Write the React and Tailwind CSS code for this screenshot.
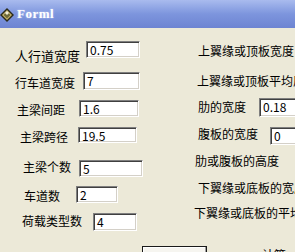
import React from 'react';

const cjk = { fontFamily: '"Noto Sans CJK SC", "Liberation Sans", sans-serif' };

function Field({ value, w, h, mt, ml = 0 }) {
  return (
    <div
      className="shrink-0 bg-white border border-t-[#7f7f7f] border-l-[#7f7f7f] border-b-white border-r-white shadow-[inset_1px_1px_0_#404040,inset_-1px_-1px_0_#d4d0c8] pl-[3px] text-[12px] leading-[15px] text-black"
      style={{ width: w, height: h, marginTop: mt, marginLeft: ml }}
    >
      {value}
    </div>
  );
}

const leftRows = [
  { label: '人行道宽度', h: 36, lx: 15, lw: 71, lt: 20, value: '0.75', it: 13, iw: 54, ih: 17, size: 13 },
  { label: '行车道宽度', h: 32, lx: 15, lw: 68, lt: 11, value: '7', it: 8, iw: 57, ih: 18, size: 12 },
  { label: '主梁间距', h: 26, lx: 17, lw: 62, lt: 6, value: '1.6', it: 4, iw: 60, ih: 17, size: 12 },
  { label: '主梁跨径', h: 30, lx: 20, lw: 58, lt: 7, value: '19.5', it: 5, iw: 59, ih: 16, size: 12 },
  { label: '主梁个数', h: 30, lx: 23, lw: 56, lt: 7, value: '5', it: 8, iw: 64, ih: 17, size: 12 },
  { label: '车道数', h: 26, lx: 24, lw: 52, lt: 6, value: '2', it: 4, iw: 42, ih: 17, size: 12 },
  { label: '荷载类型数', h: 28, lx: 22, lw: 71, lt: 5, value: '4', it: 5, iw: 44, ih: 18, size: 12 },
];

const rightRows = [
  { label: '上翼缘或顶板宽度', h: 38, lx: 4, lt: 15 },
  { label: '上翼缘或顶板平均厚度', h: 28, lx: 3, lt: 7 },
  { label: '肋的宽度', h: 28, lx: 4, lt: 5, lw: 61, value: '0.18', it: 4, ih: 19 },
  { label: '腹板的宽度', h: 26, lx: 4, lt: 4, lw: 72, value: '0', it: 5, ih: 18 },
  { label: '肋或腹板的高度', h: 27, lx: 1, lt: 5 },
  { label: '下翼缘或底板的宽度', h: 25, lx: 4, lt: 5 },
  { label: '下翼缘或底板的平均厚度', h: 36, lx: 0, lt: 5 },
];

function FormIcon() {
  return (
    <svg width="16" height="16" viewBox="0 0 16 16" className="shrink-0">
      <path d="M8 1 L15 8 L8 15 L1 8 Z" fill="#2a2a1a" />
      <path d="M8 3 L13 8 L8 13 L3 8 Z" fill="#c8b46a" />
      <path d="M8 4.5 L11.5 8 L8 11.5 L4.5 8 Z" fill="#6e6a3a" />
      <path d="M6 6 L8 4 L10 6 L8 8 Z" fill="#f4f0d8" />
    </svg>
  );
}

export default function App() {
  return (
    <div className="w-[295px] h-[252px] overflow-hidden bg-[#ece9d8] text-black" style={cjk}>
      <div className="h-[28px] flex items-center bg-gradient-to-b from-[#a9bbee] via-[#7d95dd] to-[#6d84d2]">
        <div className="-ml-[1px] mt-[1px]">
          <FormIcon />
        </div>
        <span
          className="ml-[2px] text-white font-bold text-[13px] tracking-[0.5px] [text-shadow:0_0_2px_#c8d4f8]"
          style={{ fontFamily: '"Liberation Serif", serif' }}
        >
          Forml
        </span>
      </div>

      <div className="flex items-start">
        <div className="w-[194px] shrink-0 flex flex-col">
          {leftRows.map((r) => (
            <div key={r.label} className="flex items-start" style={{ height: r.h }}>
              <div
                className="shrink-0 leading-[16px] whitespace-nowrap"
                style={{ marginLeft: r.lx, width: r.lw, marginTop: r.lt, fontSize: r.size }}
              >
                {r.label}
              </div>
              <Field value={r.value} w={r.iw} h={r.ih} mt={r.it} />
            </div>
          ))}
        </div>

        <div className="flex-1 flex flex-col">
          {rightRows.map((r) => (
            <div key={r.label} className="flex items-start whitespace-nowrap" style={{ height: r.h }}>
              <div
                className="shrink-0 text-[12px] leading-[16px]"
                style={{ marginLeft: r.lx, marginTop: r.lt, width: r.lw }}
              >
                {r.label}
              </div>
              {r.value && <Field value={r.value} w={60} h={r.ih} mt={r.it} />}
            </div>
          ))}
        </div>
      </div>

      <div className="flex items-start">
        <div className="ml-[142px] mt-[10px] w-[65px] h-[24px] shrink-0 border border-[#1a1a1a] bg-[#f6f5f0] shadow-[inset_-1px_-1px_0_#a0a0a0,inset_1px_1px_0_#ffffff]" />
        <div className="ml-[55px] mt-[11px] text-[12px] leading-[16px] whitespace-nowrap">计算</div>
      </div>
    </div>
  );
}
